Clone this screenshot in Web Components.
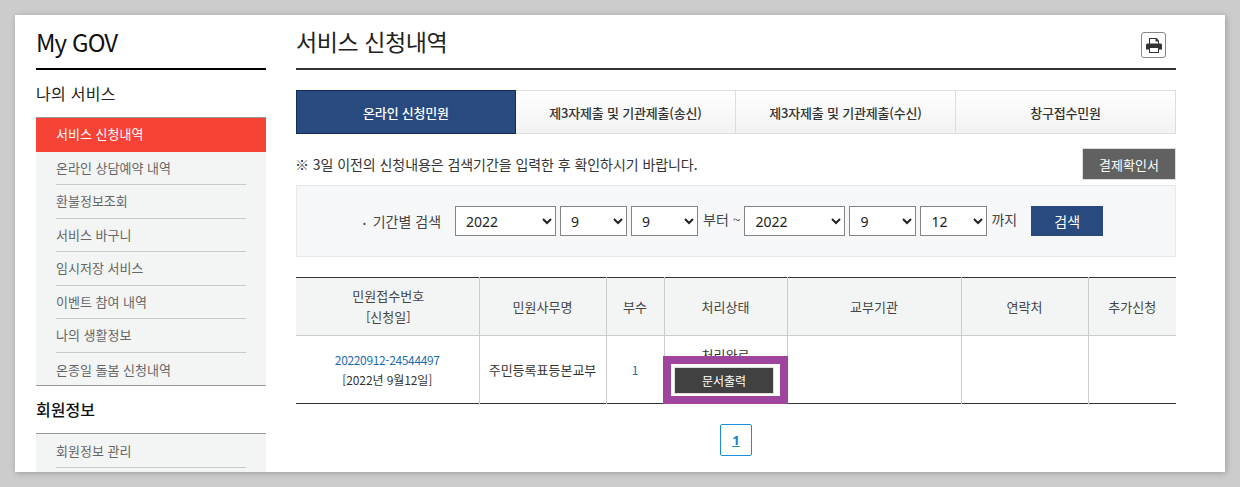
<!DOCTYPE html>
<html lang="ko">
<head>
<meta charset="utf-8">
<title>서비스 신청내역</title>
<style>
  html, body { margin: 0; height: 487px; overflow: hidden; background: #ccc; }
  body { font-family: "Noto Sans CJK KR", "Noto Sans", sans-serif; color: #333; }
</style>
</head>
<body>
<gov-page>
  <side-nav slot="side"></side-nav>
  <page-head></page-head>
  <tab-bar></tab-bar>
  <notice-row></notice-row>
  <date-search></date-search>
  <result-table></result-table>
  <page-nav></page-nav>
</gov-page>
<script>
customElements.define('gov-page', class extends HTMLElement {
  constructor() {
    super();
    this.attachShadow({ mode: 'open' }).innerHTML = `
      <style>
        :host {
          display: flex;
          gap: 30px;
          box-sizing: border-box;
          margin: 15px 15px 0;
          padding: 0 49px 0 21px;
          height: 457px;
          overflow: hidden;
          background: #fff;
          box-shadow: 1px 1px 6px rgba(0, 0, 0, .24);
        }
        aside { width: 230px; flex: none; }
        main { width: 880px; flex: none; }
      </style>
      <aside><slot name="side"></slot></aside>
      <main><slot></slot></main>
    `;
  }
});

customElements.define('side-nav', class extends HTMLElement {
  constructor() {
    super();
    const list = (items, active) => items.map((t, i) =>
      `<li class="${ i === active ? 'on' : '' }"><span>${ t }</span></li>`).join('');
    this.attachShadow({ mode: 'open' }).innerHTML = `
      <style>
        :host { display: block; }
        h1 {
          margin: 0;
          height: 53px;
          font-size: 24px;
          font-weight: 400;
          line-height: 54px;
          color: #111;
          border-bottom: 2px solid #000;
          letter-spacing: -.9px;
        }
        h2 {
          margin: 0;
          height: 47px;
          font-size: 16px;
          font-weight: 400;
          line-height: 47px;
          color: #222;
          letter-spacing: .3px;
        }
        h2.second { font-weight: 500; color: #111; letter-spacing: 0; }
        ul {
          margin: 0;
          padding: 0;
          list-style: none;
          background: #f3f5f5;
          border-top: 1px solid #999;
        }
        ul.first { border-bottom: 1px solid #999; }
        li {
          height: 33.5px;
          margin: 0;
          padding: 0 20px;
          font-size: 13px;
          line-height: 32px;
          color: #666;
        }
        li span {
          display: block;
          box-sizing: border-box;
          height: 33.5px;
          border-bottom: 1px solid #c9c9c9;
        }
        ul.first li:last-child, ul.first li:last-child span { height: 32.500px; }
        ul.first li:last-child span { border-bottom: 0; }
        ul.first li:last-child, ul.last li { line-height: 33px; }
        li.on { background: #f64336; color: #fff; }
        li.on span { border-bottom: 0; }
      </style>
      <h1>My GOV</h1>
      <h2>나의 서비스</h2>
      <ul class="first">${ list(['서비스 신청내역', '온라인 상담예약 내역', '환불정보조회', '서비스 바구니',
        '임시저장 서비스', '이벤트 참여 내역', '나의 생활정보', '온종일 돌봄 신청내역'], 0) }</ul>
      <h2 class="second">회원정보</h2>
      <ul class="last">${ list(['회원정보 관리', ''], -1) }</ul>
    `;
  }
});

customElements.define('page-head', class extends HTMLElement {
  constructor() {
    super();
    this.attachShadow({ mode: 'open' }).innerHTML = `
      <style>
        :host {
          display: flex;
          justify-content: space-between;
          align-items: flex-start;
          height: 53px;
          border-bottom: 2px solid #333;
        }
        h2 { margin: 0; font-size: 23px; font-weight: 400; line-height: 53px; color: #222; letter-spacing: -.4px; }
        button {
          display: flex;
          align-items: center;
          justify-content: center;
          box-sizing: border-box;
          width: 25px;
          height: 26px;
          margin: 17px 10px 0 0;
          padding: 0;
          background: #fff;
          border: 1px solid #888;
          border-radius: 3px;
        }
      </style>
      <h2>서비스 신청내역</h2>
      <button aria-label="인쇄">
        <svg width="16" height="15" viewBox="0 0 16 15">
          <path fill="#333" d="M3 0h7.500L13 2.500V6H3z"/>
          <path fill="#fff" d="M4 1h5.500v2.500H12V6H4z"/>
          <path fill="#333" d="M1.500 5.500h13c.8 0 1.500.7 1.500 1.500v4.500h-3V15H3v-3.500H0V7c0-.8.7-1.500 1.500-1.500z"/>
          <path fill="#fff" d="M4 10h8v4H4z"/>
        </svg>
      </button>
    `;
  }
});

customElements.define('tab-bar', class extends HTMLElement {
  constructor() {
    super();
    const tabs = ['온라인 신청민원', '제3자제출 및 기관제출(송신)', '제3자제출 및 기관제출(수신)', '창구접수민원'];
    this.attachShadow({ mode: 'open' }).innerHTML = `
      <style>
        :host {
          display: grid;
          grid-template-columns: repeat(4, 1fr);
          margin-top: 20px;
          height: 44px;
        }
        a {
          display: flex;
          align-items: center;
          justify-content: center;
          box-sizing: border-box;
          margin-left: -1px;
          font-size: 13px;
          font-weight: 500;
          color: #333;
          border: 1px solid #ddd;
          background: linear-gradient(#fff, #f2f2f2);
          letter-spacing: -.2px;
        }
        a.on { margin-left: 0; color: #fff; background: #284a7e; border-color: #0f2d55; position: relative; }
      </style>
      ${ tabs.map((t, i) => `<a class="${ i ? '' : 'on' }">${ t }</a>`).join('') }
    `;
  }
});

customElements.define('notice-row', class extends HTMLElement {
  constructor() {
    super();
    this.attachShadow({ mode: 'open' }).innerHTML = `
      <style>
        :host {
          display: flex;
          justify-content: space-between;
          align-items: center;
          margin-top: 14px;
          height: 32px;
        }
        p { margin: 0 0 0 -1px; font-size: 14px; color: #333; letter-spacing: -.06px; }
        button {
          box-sizing: border-box;
          width: 94px;
          height: 32px;
          padding: 0;
          font: 400 13px "Noto Sans CJK KR", sans-serif;
          color: #fff;
          background: #616161;
          border: 1px solid #ddd;
        }
      </style>
      <p>※ 3일 이전의 신청내용은 검색기간을 입력한 후 확인하시기 바랍니다.</p>
      <button>결제확인서</button>
    `;
  }
});

customElements.define('date-select', class extends HTMLElement {
  constructor() {
    super();
    const w = this.getAttribute('w');
    const v = this.getAttribute('value');
    this.attachShadow({ mode: 'open' }).innerHTML = `
      <style>
        :host { display: block; }
        select {
          display: block;
          box-sizing: border-box;
          width: ${ w }px;
          height: 30px;
          padding: 0 0 0 6px;
          font: 14px "Noto Sans", "Noto Sans CJK KR", sans-serif;
          color: #222;
          background: #fff;
          border: 1px solid #858585;
          border-radius: 0;
        }
      </style>
      <select><option>${ v }</option></select>
    `;
  }
});

customElements.define('date-search', class extends HTMLElement {
  constructor() {
    super();
    this.attachShadow({ mode: 'open' }).innerHTML = `
      <style>
        :host {
          display: flex;
          align-items: center;
          box-sizing: border-box;
          height: 72px;
          margin-top: 5px;
          padding-left: 66px;
          background: #f6f7f9;
          border: 1px solid #e6e8ea;
          font-size: 14px;
          color: #444;
        }
        .label { width: 92px; white-space: nowrap; }
        .label::before { content: '•'; font-size: 8px; margin-right: 7px; vertical-align: 1px; }
        .sel { display: flex; gap: 4px; }
        .txt { margin: -4px 4px 0 5px; white-space: nowrap; }
        .to { margin: -4px 14px 0 4px; }
        button {
          width: 72px;
          height: 30px;
          padding: 0;
          font: 400 14px "Noto Sans CJK KR", sans-serif;
          color: #fff;
          background: #284a7e;
          border: 0;
        }
      </style>
      <span class="label">기간별 검색</span>
      <div class="sel">
        <date-select w="101" value="2022"></date-select>
        <date-select w="67" value="9"></date-select>
        <date-select w="67" value="9"></date-select>
      </div>
      <span class="txt">부터 ~</span>
      <div class="sel">
        <date-select w="101" value="2022"></date-select>
        <date-select w="67" value="9"></date-select>
        <date-select w="67" value="12"></date-select>
      </div>
      <span class="txt to">까지</span>
      <button>검색</button>
    `;
  }
});

customElements.define('result-table', class extends HTMLElement {
  constructor() {
    super();
    const cols = [183, 127, 58, 123, 174, 127, 88];
    this.attachShadow({ mode: 'open' }).innerHTML = `
      <style>
        :host { display: block; position: relative; margin-top: 20px; }
        table {
          width: 880px;
          table-layout: fixed;
          border-collapse: collapse;
          font-size: 13px;
          text-align: center;
          border-top: 1px solid #333;
          border-bottom: 1px solid #333;
        }
        th, td { padding: 0; border-left: 1px solid #ccc; vertical-align: middle; }
        th:first-child, td:first-child { border-left: 0; }
        th {
          height: 57px;
          font-weight: 400;
          line-height: 21px;
          color: #444;
          background: #f3f5f5;
          border-bottom: 1px solid #ccc;
        }
        th:first-child { height: 55px; padding: 0 0 2px 2px; }
        td { height: 67px; color: #333; line-height: 20px; }
        .num { color: #1f6cae; font-size: 12px; letter-spacing: -.35px; }
        .date { font-size: 12px; letter-spacing: -.1px; }
        .blue { color: #1f6cae; font-size: 12px; }
        .state { display: block; height: 52px; line-height: 21px; }
        .mark {
          position: absolute;
          left: 367px;
          top: 79px;
          box-sizing: border-box;
          width: 125px;
          height: 48px;
          padding: 3px 0 0 3px;
          background: #fff;
          border: 8px solid #a0459e;
        }
        .mark button {
          display: block;
          width: 100px;
          height: 27px;
          padding: 0;
          font: 400 12px "Noto Sans CJK KR", sans-serif;
          color: #fff;
          background: #414141;
          border: 1px solid #ddd;
        }
      </style>
      <table>
        <colgroup>${ cols.map(c => `<col style="width:${ c }px">`).join('') }</colgroup>
        <tr>
          <th>민원접수번호<br>[신청일]</th><th>민원사무명</th><th>부수</th><th>처리상태</th>
          <th>교부기관</th><th>연락처</th><th>추가신청</th>
        </tr>
        <tr>
          <td><span class="num">20220912-24544497</span><br><span class="date">[2022년 9월12일]</span></td>
          <td>주민등록표등본교부</td>
          <td class="blue">1</td>
          <td><span class="state">처리완료</span></td>
          <td></td><td></td><td></td>
        </tr>
      </table>
      <div class="mark"><button>문서출력</button></div>
    `;
  }
});

customElements.define('page-nav', class extends HTMLElement {
  constructor() {
    super();
    this.attachShadow({ mode: 'open' }).innerHTML = `
      <style>
        :host { display: flex; justify-content: center; margin-top: 20px; }
        a {
          box-sizing: border-box;
          width: 32px;
          height: 32px;
          font: 700 13px/30px "Noto Sans", sans-serif;
          text-align: center;
          text-decoration: underline;
          color: #1583d1;
          border: 1px solid #1a8fdc;
          border-radius: 2px;
        }
      </style>
      <a>1</a>
    `;
  }
});
</script>
</body>
</html>
